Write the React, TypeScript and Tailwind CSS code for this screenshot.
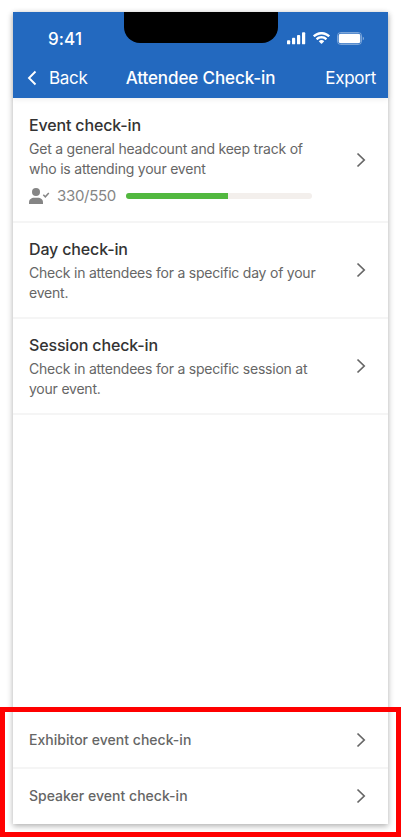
import React from 'react';

interface CheckInOption {
  id: string;
  title: string;
  lines: string[];
  progress?: { checkedIn: number; total: number };
}

const OPTIONS: CheckInOption[] = [
  {
    id: 'event',
    title: 'Event check-in',
    lines: ['Get a general headcount and keep track of', 'who is attending your event'],
    progress: { checkedIn: 330, total: 550 },
  },
  {
    id: 'day',
    title: 'Day check-in',
    lines: ['Check in attendees for a specific day of your', 'event.'],
  },
  {
    id: 'session',
    title: 'Session check-in',
    lines: ['Check in attendees for a specific session at', 'your event.'],
  },
];

const ROLE_LINKS = ['Exhibitor event check-in', 'Speaker event check-in'];

const Chevron: React.FC = () => (
  <svg width="10" height="16" viewBox="0 0 10 16" fill="none" className="shrink-0 text-[#666]">
    <path d="M1.5 1.500 8.200 8l-6.700 6.500" stroke="currentColor" strokeWidth="1.700" />
  </svg>
);

const StatusIcons: React.FC = () => (
  <div className="flex items-center text-white">
    <svg width="19" height="13" viewBox="0 0 19 13" fill="currentColor">
      <rect x="0" y="8.3" width="3.2" height="4" rx="0.9" />
      <rect x="5" y="5.8" width="3.2" height="6.5" rx="0.9" />
      <rect x="10" y="3" width="3.2" height="9.3" rx="0.9" />
      <rect x="15" y="0.3" width="3.2" height="12" rx="0.9" />
    </svg>
    <svg width="17" height="12" viewBox="0 0 17 12" fill="currentColor" className="ml-[7px]">
      <path d="M8.5 2.4c2.5 0 4.8 1 6.6 2.6.1.1.3.1.5 0l1.2-1.3c.2-.1.2-.4 0-.5-4.6-4.3-12-4.3-16.6 0-.2.1-.2.4 0 .5L1.4 5c.2.1.4.1.5 0 1.8-1.6 4.1-2.6 6.6-2.6z" />
      <path d="M8.5 6.6c1.4 0 2.7.5 3.7 1.4.1.1.4.1.5 0l1.3-1.3c.1-.1.1-.4 0-.5-3.1-2.9-7.9-2.9-11 0-.1.1-.1.4 0 .5L4.3 8c.1.1.4.1.5 0 1-.9 2.3-1.4 3.7-1.4z" />
      <path d="M11 9.5c.2-.1.2-.4 0-.5-1.4-1.2-3.6-1.2-5 0-.2.1-.2.4 0 .5l2.2 2.2c.2.2.4.2.6 0z" />
    </svg>
    <svg width="27" height="13" viewBox="0 0 27 13" fill="none" className="ml-[7px]">
      <rect x="0.5" y="0.5" width="24" height="12" rx="3.3" stroke="currentColor" strokeOpacity="0.4" />
      <rect x="1.700" y="1.700" width="21.600" height="9.600" rx="2" fill="currentColor" />
      <path d="M25.8 4.7v3.6c.7-.3 1.1-1 1.1-1.8s-.4-1.5-1.1-1.8z" fill="currentColor" fillOpacity="0.5" />
    </svg>
  </div>
);

const Header: React.FC = () => (
  <header className="relative h-[86px] bg-[#2369bf] text-white shadow-[0_1px_6px_rgba(0,0,0,0.08)]">
    {/* Notch sits over the status bar */}
    <div className="absolute left-[111px] top-0 h-[31px] w-[154px] rounded-b-[16px] bg-black" />
    <div className="flex h-[44px] items-center justify-between pl-[35px] pr-[24px] pt-[8px]">
      <span className="pt-px text-[17px] font-medium leading-5 tracking-[0.1px]">9:41</span>
      <StatusIcons />
    </div>
    <div className="grid h-[42px] grid-cols-[1fr_auto_1fr] items-center px-3 pt-[3px] text-[17px]">
      <button className="flex items-center">
        <svg width="14" height="16" viewBox="0 0 14 16" fill="none" className="-mt-px">
          <path d="M10.500 1.500 4 8l6.500 6.500" stroke="currentColor" strokeWidth="1.900" />
        </svg>
        <span className="ml-[10px] tracking-[-0.3px]">Back</span>
      </button>
      <h1 className="font-medium tracking-[-0.1px]">Attendee Check-in</h1>
      <button className="text-right tracking-[-0.25px]">Export</button>
    </div>
  </header>
);

const Progress: React.FC<{ checkedIn: number; total: number }> = ({ checkedIn, total }) => (
  <div className="mt-2 flex h-5 items-center">
    <svg width="21" height="16" viewBox="0 0 21 16" fill="none" className="shrink-0">
      <circle cx="7" cy="4" r="4" fill="#858585" />
      <path d="M0 16v-1.5C0 11.3 2.5 9.8 5 9.8h4c2.5 0 5 1.5 5 4.7V16z" fill="#858585" />
      <path d="m14.3 6.8 2 2 3.500-3.800" stroke="#858585" strokeWidth="1.500" />
    </svg>
    <span className="ml-[7px] w-[60px] shrink-0 text-[15px] tracking-[-0.3px] text-[#858585]">
      {checkedIn}/{total}
    </span>
    <div className="ml-[9px] h-[6px] w-[186px] overflow-hidden rounded-full bg-[#f3efec]">
      <div className="h-full bg-[#52b83f]" style={{ width: `${(checkedIn / total) * 100 - 5}%` }} />
    </div>
  </div>
);

const App: React.FC = () => {
  return (
    <div className="relative h-[837px] w-[401px] overflow-hidden bg-white pl-[13px] pt-3 font-['Inter',sans-serif]">
      <div className="flex h-[812px] w-[375px] flex-col bg-white shadow-[0_2px_6px_rgba(0,0,0,0.32)]">
        <Header />
        <main className="pt-px">
          {OPTIONS.map((option) => (
            <section
              key={option.id}
              className="flex items-center justify-between border-b-2 border-[#f5f5f5] py-[15px] pl-4 pr-[22px]"
            >
              <div>
                <h2 className="text-base font-medium leading-[22px] tracking-[-0.15px] text-[#333]">
                  {option.title}
                </h2>
                <p className="-mb-px mt-[3px] whitespace-nowrap text-sm leading-5 tracking-[-0.22px] text-[#666]">
                  {option.lines.map((line) => (
                    <span key={line} className="block">{line}</span>
                  ))}
                </p>
                {option.progress && <Progress {...option.progress} />}
              </div>
              <Chevron />
            </section>
          ))}
        </main>
        <footer className="mt-auto">
          {ROLE_LINKS.map((label) => (
            <a
              key={label}
              className="flex h-[57px] items-center justify-between border-b-2 border-[#f5f5f5] pl-4 pr-[22px] pt-px text-sm font-medium tracking-[0.02px] text-[#666] last:h-[55px] last:border-b-0 last:pb-px last:pt-0"
            >
              {label}
              <Chevron />
            </a>
          ))}
        </footer>
      </div>
      {/* Highlight around the role links */}
      <div className="absolute left-0 top-[707px] h-[130px] w-[401px] border-[5px] border-[#ff0000]" />
    </div>
  );
};

export default App;
